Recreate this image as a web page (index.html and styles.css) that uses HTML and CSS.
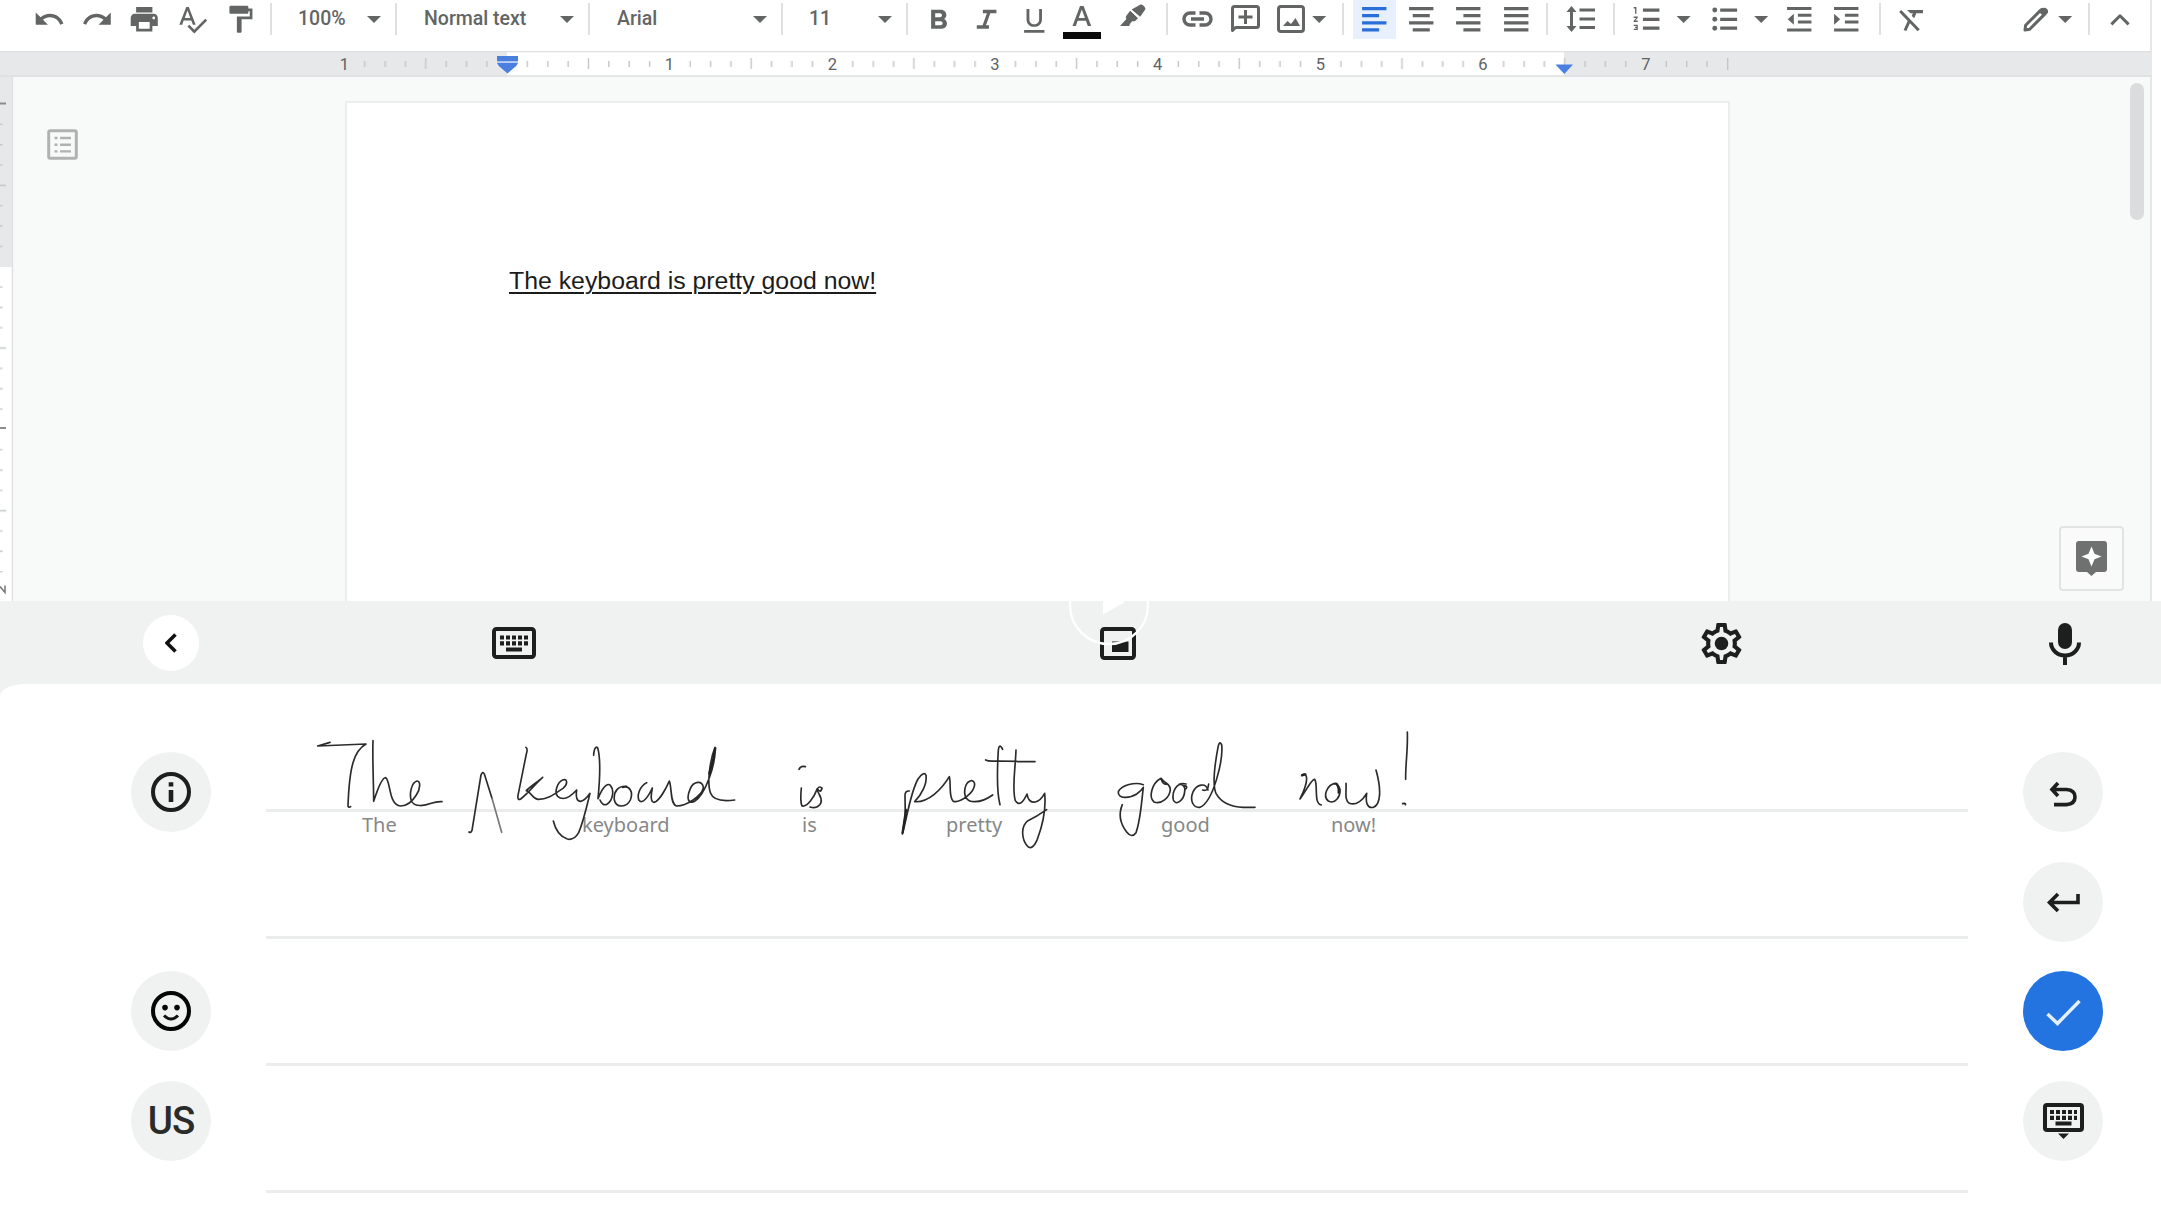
FILE: index.html
```html
<!DOCTYPE html>
<html lang="en">
<head>
<meta charset="utf-8">
<title>Document with handwriting keyboard</title>
<link rel="stylesheet" href="styles.css">
</head>
<body>
<main class="screen">
  <section class="docs">
    <header class="toolbar">
      <div class="group g-history">
        <span class="tool"><svg class="ic" viewBox="0 0 24 24"><path d="M12.5 8c-2.65 0-5.05.99-6.9 2.6L2 7v9h9l-3.62-3.62c1.39-1.16 3.16-1.88 5.12-1.88 3.54 0 6.55 2.31 7.6 5.5l2.37-.78C21.08 11.03 17.15 8 12.5 8z"/></svg></span>
        <span class="tool"><svg class="ic" viewBox="0 0 24 24"><path d="M18.4 10.6C16.55 8.99 14.15 8 11.5 8c-4.65 0-8.58 3.03-9.96 7.22L3.9 16c1.05-3.19 4.05-5.5 7.6-5.5 1.95 0 3.73.72 5.12 1.88L13 16h9V7l-3.6 3.6z"/></svg></span>
        <span class="tool"><svg class="ic" viewBox="0 0 24 24"><path d="M19 8H5c-1.660 0-3 1.340-3 3v6h4v4h12v-4h4v-6c0-1.660-1.340-3-3-3zm-3 11H8v-5h8v5zm3-7c-.550 0-1-.450-1-1s.450-1 1-1 1 .450 1 1-.450 1-1 1zm-1-9H6v4h12V3z"/></svg></span>
        <span class="tool"><svg class="ic" viewBox="0 0 24 24"><path d="M12.450 16h2.090L9.430 3H7.570L2.460 16h2.090l1.120-3h5.640l1.140 3zm-6.020-5L8.500 5.480 10.570 11H6.430zm15.160.590l-8.090 8.090L9.830 16l-1.410 1.410 5.090 5.090L23 13l-1.410-1.410z"/></svg></span>
        <span class="tool"><svg class="ic" viewBox="0 0 24 24"><path d="M18 4V3c0-.550-.450-1-1-1H5c-.550 0-1 .450-1 1v4c0 .550.450 1 1 1h12c.550 0 1-.450 1-1V6h1v4H9.500v11c0 .550.450 1 1 1h1.500c.550 0 1-.450 1-1v-9h8V4h-3z"/></svg></span>
      </div>
      <div class="group g-zoom"><span>100%</span><i class="caret"></i></div>
      <div class="group g-style"><span>Normal text</span><i class="caret"></i></div>
      <div class="group g-font"><span>Arial</span><i class="caret"></i></div>
      <div class="group g-size"><span>11</span><i class="caret"></i></div>
      <div class="group g-format">
        <span class="tool"><svg class="ic" viewBox="0 0 24 24"><path d="M15.600 11.800c.970-.670 1.650-1.770 1.650-2.800 0-2.260-1.750-4-4-4H6v14h8c2.090 0 3.700-1.700 3.700-3.790 0-1.520-.860-2.820-2.100-3.410zM9 7.500h3.500c.830 0 1.500.670 1.500 1.500s-.670 1.500-1.500 1.500H9v-3zm4 9H9v-3h4c.830 0 1.500.670 1.500 1.500s-.670 1.500-1.500 1.500z"/></svg></span>
        <span class="tool"><svg class="ic" viewBox="0 0 24 24"><path d="M9.500 5v2.500h3L9.300 16.500H5V19h9v-2.500h-2.200L15 7.500h4.500V5z"/></svg></span>
        <span class="tool"><svg class="ic" viewBox="0 0 24 24"><path d="M12 17.600c3.310 0 5.700-2.400 5.700-5.500V4.500h-2.100v7.600c0 2-1.500 3.500-3.600 3.500s-3.600-1.500-3.600-3.500V4.500H6.300v7.600c0 3.100 2.390 5.500 5.700 5.500zM4.500 20v2h15v-2z"/></svg></span>
        <span class="tool"><svg class="ic-color" viewBox="0 0 38 36"><path d="M17 2h3.600l7.600 20h-3.400l-1.900-5.200h-8.200L12.800 22H9.500zm-1.300 12h6.200L18.800 5.400z"/><path class="ink" d="M0 28h38v7H0z"/></svg></span>
        <span class="tool marker"><svg class="ic-marker" viewBox="0 0 26 24"><path d="M18.300 1.800 20 .8q1.400-.8 2.700.3l2 1.900q1.200 1.400.4 2.800l-5 7L11.600 5.600zM10.300 6.600l7.800 7.400-2.600 2.700q-1.500 1-2.800.2L10.500 19l-1.400 3H0l6.400-7.100q-1.300-1.400-.2-2.800z"/><path class="cut" d="m10 6 9 8.500"/></svg></span>
      </div>
      <div class="group g-insert">
        <span class="tool"><svg class="ic-link" viewBox="0 0 31 16"><path class="line" d="M13.500 2H8a6 6 0 0 0 0 12h5.500M17.500 2H23a6 6 0 0 1 0 12h-5.500M9 8h13"/></svg></span>
        <span class="tool"><svg class="ic-comment" viewBox="0 0 29 28"><path class="line" d="M1.500 25.500v-22q0-2 2-2h22q2 0 2 2v17q0 2-2 2h-21zM14.500 5v14M7.500 12h14"/></svg></span>
        <span class="tool image"><svg class="ic-image" viewBox="0 0 28 28"><rect class="line" x="1.500" y="1.500" width="25" height="25" rx="2.500"/><path d="m6 21 4.500-5 3.500 3 4.500-6 4.500 8z"/></svg></span>
        <i class="caret"></i>
      </div>
      <div class="group g-align">
        <span class="tool active"><svg class="ic" viewBox="0 0 24 24"><path d="M3 3h18v2.400H3zM3 8.200h12.600v2.400H3zM3 13.400h18v2.400H3zM3 18.600h12.600V21H3z"/></svg></span>
        <span class="tool"><svg class="ic" viewBox="0 0 24 24"><path d="M3 3h18v2.400H3zM5.700 8.200h12.600v2.400H5.700zM3 13.400h18v2.400H3zM5.700 18.600h12.600V21H5.700z"/></svg></span>
        <span class="tool"><svg class="ic" viewBox="0 0 24 24"><path d="M3 3h18v2.400H3zM8.400 8.200H21v2.400H8.400zM3 13.400h18v2.400H3zM8.400 18.600H21V21H8.400z"/></svg></span>
        <span class="tool"><svg class="ic" viewBox="0 0 24 24"><path d="M3 3h18v2.400H3zM3 8.200h18v2.400H3zM3 13.400h18v2.400H3zM3 18.600h18V21H3z"/></svg></span>
      </div>
      <div class="group g-spacing">
        <span class="tool"><svg class="ic-spacing" viewBox="0 0 29 26"><path d="M13.500 2.500H29v3H13.500zM13.500 11.500H29v3H13.500zM13.500 20H29v3H13.500zM4 5h3v16H4z"/><path d="M5.500 0 10.500 6H.5zM5.500 26l5-6H.5z"/></svg></span>
      </div>
      <div class="group g-lists">
        <span class="tool"><svg class="ic" viewBox="0 0 24 24"><path d="M8.800 4H21v2.400H8.800zM8.800 10.800H21v2.400H8.800zM8.800 17.400H21v2.400H8.800z"/><path d="M2 17h2v.5H3v1h1v.5H2v1h3v-4H2v1zm1-9h1V3H2v1h1v4zm-1 3h1.800L2 13.100v.9h3v-1H3.200L5 10.900V10H2v1z"/></svg></span>
        <i class="caret"></i>
        <span class="tool"><svg class="ic" viewBox="0 0 24 24"><path d="M9 4h12.500v2.400H9zM9 10.800h12.500v2.400H9zM9 17.400h12.500v2.400H9z"/><circle cx="5" cy="5.200" r="1.800"/><circle cx="5" cy="12" r="1.800"/><circle cx="5" cy="18.600" r="1.800"/></svg></span>
        <i class="caret"></i>
        <span class="tool"><svg class="ic" viewBox="0 0 24 24"><path d="M3 3h18v2.200H3zM11 8h10v2.200H11zM11 13h10v2.200H11zM3 18.800h18V21H3zM8 8v8l-4.500-4z"/></svg></span>
        <span class="tool"><svg class="ic" viewBox="0 0 24 24"><path d="M3 3h18v2.200H3zM11 8h10v2.200H11zM11 13h10v2.200H11zM3 18.800h18V21H3zM3 8v8l4.500-4z"/></svg></span>
      </div>
      <div class="group g-mode">
        <span class="tool"><svg class="ic-clear" viewBox="0 0 24 23"><path d="M8 1h16v3.300h-6.700l-2.100 5-2.400-2.400 1-2.600h-2.400z"/><path class="line" d="m1.200 2 18.500 19.300M10.500 11.500 6 21.500"/></svg></span>
        <span class="tool pencil"><svg class="ic-pencil" viewBox="0 0 25 25"><path class="line" d="M2 23l.6-4.700L17.500 3.400q2-2 4 0t0 4L6.700 22.300z"/><path d="m16 5 4-4q2.200-.8 4 1t.8 4l-4 3.600z"/></svg></span>
        <i class="caret"></i>
      </div>
      <div class="group g-collapse"><svg class="ic-chevron" viewBox="0 0 20 13"><path class="line" d="m1.400 11.400 8.600-8.600 8.600 8.600"/></svg></div>
    </header>

    <svg class="ruler" viewBox="0 0 2151 26">
      <defs>
        <pattern id="inch" x="344.500" y="0" width="162.700" height="26" patternUnits="userSpaceOnUse">
          <path class="tick" d="M20.300 10v6M40.700 10v6M61 10v6M81.300 7v11M101.700 10v6M122 10v6M142.400 10v6"/>
        </pattern>
      </defs>
      <path class="margin" d="M0 0h507v26H0zM1564 0h587v26h-587z"/>
      <path class="edge" d="M0 .5h2151M0 25h2151"/>
      <path fill="url(#inch)" d="M346 0h1300v26H346z"/>
      <path fill="url(#inch)" d="M1646 0h70v26h-70z"/>
      <path class="tick" d="M1727.700 7v12"/>
      <g class="nums"><text x="344.500" y="18.500">1</text><text x="669.500" y="18.500">1</text><text x="832.300" y="18.500">2</text><text x="995" y="18.500">3</text><text x="1157.700" y="18.500">4</text><text x="1320.400" y="18.500">5</text><text x="1483" y="18.500">6</text><text x="1646" y="18.500">7</text></g>
      <path class="stop" d="M497 5h21v5.500h-21zM497 12h21q-1.500 3-3 4l-7.500 6.500-7.500-6.500q-1.500-1-3-4zM1555.500 13.500h17.500l-8.700 9.500z"/>
      <path class="stop-gap" d="M497 10.500h21V12h-21z"/>
    </svg>

    <div class="canvas">
      <svg class="vruler" viewBox="0 0 14 524">
        <defs>
          <pattern id="vinch" x="0" y="27" width="14" height="162.700" patternUnits="userSpaceOnUse">
            <path class="tick" d="M0 20.300h2.500M0 40.700h2.500M0 61h2.500M0 81.300h6M0 101.700h2.500M0 122h2.500M0 142.400h2.500"/>
          </pattern>
        </defs>
        <path class="margin" d="M0 0h12v190H0z"/>
        <path fill="url(#vinch)" d="M0 27.500h12v486H0z"/>
        <path class="mark" d="M0 26.500h6M0 351h6"/>
        <path class="two" d="M0 509.500l5 6v-7"/>
        <path class="edge" d="M12.500 0v524"/>
      </svg>
      <aside class="outline">
        <svg class="ic-outline" viewBox="0 0 31 31"><rect x="1.700" y="1.700" width="27.600" height="27.600" rx="1.500"/><path d="M7.500 9h3M13 9h11M7.500 15.700h3M13 15.700h11M7.500 22.400h3M13 22.400h11"/></svg>
      </aside>
      <article class="page"><p class="typed">The keyboard is pretty good now!</p></article>
      <aside class="rail">
        <div class="scrollbar"></div>
        <button class="explore" aria-label="Explore"><svg class="ic-explore" viewBox="0 0 31 35"><path d="M3 0h25q3 0 3 3v25q0 3-3 3h-8l-4.500 4-4.500-4H3q-3 0-3-3V3q0-3 3-3z"/><path class="star" d="m15.500 5.500 3 7.200 7 2.800-7 2.800-3 7.200-3-7.200-7-2.800 7-2.800z"/></svg></button>
      </aside>
    </div>
  </section>

  <section class="keyboard">
    <nav class="kbar">
      <button class="back" aria-label="Back"><svg class="ic-back" viewBox="0 0 12 20"><path d="M10.500 1.500 2 10l8.500 8.500"/></svg></button>
      <svg class="ic-kb" viewBox="0 0 44 32"><rect class="o" x="2" y="2" width="40" height="28" rx="2.500"/><path class="keys" d="M8 10.500h28M8 16.300h28"/><path class="space" d="M14 22.500h16"/></svg>
      <svg class="ic-pip" viewBox="0 0 36 33"><rect class="o" x="2" y="2" width="32" height="29" rx="2.500"/><path d="M12 14.500h16.500V25H12z"/></svg>
      <svg class="ic-gear" viewBox="2 2 20 20"><path d="M19.430 12.980c.040-.320.070-.640.070-.980 0-.340-.030-.660-.070-.980l2.110-1.650c.190-.150.240-.420.120-.640l-2-3.460c-.090-.160-.260-.250-.440-.250-.060 0-.120.010-.170.030l-2.490 1c-.520-.400-1.080-.730-1.690-.980l-.380-2.650C14.460 2.180 14.250 2 14 2h-4c-.250 0-.460.180-.490.420l-.380 2.650c-.610.250-1.170.590-1.690.980l-2.490-1c-.060-.020-.120-.030-.180-.030-.170 0-.340.090-.430.250l-2 3.460c-.130.220-.070.490.120.640l2.110 1.650c-.040.320-.070.650-.070.980 0 .330.030.660.070.980l-2.110 1.650c-.190.150-.240.420-.120.640l2 3.460c.090.160.260.250.440.250.060 0 .120-.010.170-.030l2.490-1c.520.400 1.080.730 1.690.980l.380 2.650c.030.240.240.420.490.420h4c.250 0 .460-.180.490-.420l.380-2.650c.610-.250 1.170-.590 1.690-.980l2.490 1c.060.020.120.030.180.030.170 0 .340-.090.430-.250l2-3.460c.120-.220.070-.490-.120-.640l-2.110-1.650zm-1.980-1.710c.040.310.050.520.050.730 0 .210-.020.430-.050.730l-.140 1.130.89.700 1.080.840-.7 1.210-1.270-.51-1.040-.42-.9.680c-.430.320-.840.560-1.250.730l-1.060.43-.16 1.130-.2 1.350h-1.400l-.19-1.350-.16-1.130-1.060-.43c-.430-.180-.830-.410-1.230-.71l-.91-.7-1.060.43-1.270.51-.7-1.210 1.080-.84.890-.7-.14-1.130c-.030-.310-.050-.540-.050-.740s.020-.430.050-.730l.14-1.130-.89-.7-1.080-.84.7-1.210 1.270.51 1.040.42.900-.68c.430-.320.840-.560 1.250-.73l1.060-.43.160-1.130.2-1.350h1.390l.19 1.350.16 1.130 1.060.43c.430.180.830.410 1.230.71l.91.700 1.060-.43 1.270-.51.700 1.210-1.070.85-.89.700.14 1.130z"/><circle cx="12" cy="12" r="3.300"/></svg>
      <svg class="ic-mic" viewBox="0 0 32 42"><rect x="9" y="0" width="14" height="26" rx="7"/><path class="o" d="M2 19.500a14 13 0 0 0 28 0M16 32v10"/></svg>
      <svg class="play" viewBox="0 0 82 82"><circle cx="41" cy="41" r="39"/><path d="M35 22v28.500L57 38z"/></svg>
    </nav>

    <div class="pad">
      <div class="side">
        <button class="round info" aria-label="Info"><svg class="ic-face" viewBox="0 0 40 40"><circle class="o" cx="20" cy="20" r="18"/><path d="M17.700 10.200h4.600v4.200h-4.600zM17.700 18h4.600v12h-4.600z"/></svg></button>
        <button class="round" aria-label="Emoji"><svg class="ic-face dark" viewBox="0 0 40 40"><circle class="o" cx="20" cy="20" r="18"/><circle cx="14" cy="16.600" r="2.800"/><circle cx="26" cy="16.600" r="2.800"/><path class="smile" d="M13 24.500q7 7 14 0"/></svg></button>
        <button class="round lang">US</button>
      </div>

      <div class="sheet">
        <div class="line"></div><div class="line"></div><div class="line"></div><div class="line"></div>
        <span class="word w-the">The</span><span class="word w-keyboard">keyboard</span><span class="word w-is">is</span><span class="word w-pretty">pretty</span><span class="word w-good">good</span><span class="word w-now">now!</span>
        <svg class="ink-layer" viewBox="266 684 1702 200">
          <g transform="translate(290 710) scale(.33333)">
            <path d="M120 97 83 108 228 102C192 122 178 170 174 288Q176 294 182 290"/>
            <path d="M249 92C247 150 251 220 251 274C262 240 276 202 287 203C302 210 295 286 332 288C350 288 366 276 379 255C392 236 392 212 381 213C365 217 357 250 364 273C374 293 405 287 424 280Q440 274 456 275"/>
            <path d="M537 366Q543 370 546 361L573 195Q578 182 583 192L606 265"/><path class="faint" d="m606 265 29 102"/>
            <path d="M708 112Q714 116 709 132L684 256Q682 272 692 267C715 250 735 222 758 202C742 216 718 232 709 242C724 246 726 266 744 268C775 269 795 250 819 235C835 222 832 204 818 210C802 217 792 246 803 259C820 274 840 262 860 240C857 260 860 274 872 274Q885 272 900 250C890 290 880 335 866 368Q852 392 832 387C810 380 796 358 790 333"/>
            <path d="M911 136C912 112 921 105 924 117C932 150 929 215 924 266C935 238 950 216 961 226C974 240 968 272 952 282Q938 290 930 270"/>
            <path d="M1010 229C985 226 970 245 973 270C979 296 1010 292 1021 270C1031 245 1018 226 998 232M1070 218C1050 228 1040 255 1047 271C1057 284 1074 262 1087 234C1082 258 1082 276 1092 277C1106 274 1126 240 1138 213C1146 232 1140 284 1160 288C1190 288 1235 258 1240 234C1240 210 1210 212 1200 238C1188 266 1196 284 1214 274C1245 255 1278 165 1275 112C1260 150 1250 220 1262 250Q1272 278 1334 270"/>
            <path class="heavy" d="M1276 115Q1268 160 1258 190"/>
          </g>
          <g transform="translate(740 710) scale(.33333)">
            <path d="M177 178Q182 166 196 170M184 234Q180 275 186 288C202 292 222 262 232 236Q240 226 246 236M232 236C230 252 248 256 243 278Q234 298 210 291M232 236Q242 252 246 234"/>
            <path d="M508 243Q494 242 495 258L496 318 487 372C500 330 510 250 534 207Q552 182 558 196C562 220 545 254 524 275C565 278 605 238 628 200C634 225 625 260 640 274C660 280 704 248 704 222C702 205 680 210 675 235C670 262 683 276 705 275Q730 275 758 255"/>
            <path class="heavy" d="M498 300 488 368"/>
            <path d="M788 118Q778 98 775 120C772 170 768 240 780 284M737 150Q745 155 770 153L885 155M828 120C826 180 815 235 826 272C838 292 852 272 861 252C864 272 874 278 886 276Q902 272 914 250C918 290 910 340 892 388Q876 424 862 408C846 390 840 350 864 332Q890 320 920 299"/>
          </g>
          <g transform="translate(1080 710) scale(.33333)">
            <path d="M190 224C165 215 125 225 115 245C112 268 150 265 170 252Q184 242 190 232C185 270 182 330 168 368Q155 386 140 366C120 340 116 310 127 284"/>
            <path d="M243 205C215 220 205 262 222 276C245 284 270 262 271 238C270 220 255 222 243 205M243 205Q248 226 262 222M318 222C290 215 275 245 280 270C288 290 312 270 314 245Q318 225 298 222M310 228Q325 226 318 236"/>
            <path d="M384 240C378 218 350 220 338 248C330 270 338 294 360 292C400 275 430 150 425 104Q418 90 414 112C405 160 395 220 408 250Q430 290 490 292L525 292M368 240Q384 246 386 222"/>
            <path d="M666 195Q678 186 680 205Q680 228 660 267C680 240 695 206 704 208C715 222 700 282 724 285M768 220C740 222 728 260 745 273C765 284 782 260 780 238Q772 216 758 222M798 220C800 245 792 270 808 280C830 288 850 268 860 250C856 278 862 296 880 292C902 284 905 240 888 180M982 66C984 120 976 165 977 208M968 281Q978 278 976 284"/>
            <path class="heavy" d="M770 222Q778 232 776 248M666 196 676 193"/>
          </g>
        </svg>
      </div>

      <div class="side right">
        <button class="round" aria-label="Undo"><svg class="ic-undo" viewBox="0 0 28 26"><path class="o" d="M9 2 3 8.500 9 15M3 8.500h14.500q8.500.5 8.500 7.500t-8.500 7.600H5"/></svg></button>
        <button class="round" aria-label="Enter"><svg class="ic-enter" viewBox="0 0 35 21"><path class="o" d="M12 2 3.500 10.500 12 19M3.500 10.500H32V2"/></svg></button>
        <button class="round done" aria-label="Done"><svg class="ic-check" viewBox="0 0 35 27"><path class="o" d="M1.500 15 11.500 24.500 33.500 2"/></svg></button>
        <button class="round" aria-label="Hide keyboard"><svg class="ic-hide" viewBox="0 0 41 36"><rect class="o" x="2" y="2" width="37" height="25" rx="2"/><path class="keys" d="M7 9h27M7 14.800h27"/><path class="space" d="M12.500 20.500h16"/><path d="M15 30.500h11L20.500 36z"/></svg></button>
      </div>
    </div>
  </section>
</main>
</body>
</html>
```
FILE: styles.css
```css
* { box-sizing: border-box; }
body { margin: 0; background: #fff; font-family: Roboto, "Liberation Sans", sans-serif; }
svg { display: block; flex: none; }
button { border: 0; padding: 0; font: inherit; }
.screen { width: 2161px; height: 1223px; overflow: hidden; display: flex; flex-direction: column; }

/* document editor */
.docs { width: 2152px; height: 601px; border-right: 2px solid #e6e8e8; display: flex; flex-direction: column; flex: none; }
.toolbar { display: flex; height: 51px; flex: none; color: #636565; font-size: 19.5px; font-weight: 500; }
.toolbar svg { fill: #636565; }
.group { display: flex; align-items: center; height: 38px; flex: none; background: linear-gradient(#dfe1e1, #dfe1e1) right 3px / 2px 32px no-repeat; }
.group > span { white-space: nowrap; }
.tool { width: 47.6px; height: 38px; display: flex; align-items: center; justify-content: center; flex: none; }
.caret { width: 14px; height: 7px; margin-top: 1px; flex: none; background: #636565; clip-path: polygon(0 0, 100% 0, 50% 100%); }
.line { fill: none; }
.toolbar .line { fill: none; stroke: #636565; stroke-width: 3; stroke-linejoin: round; }
.ic { width: 32.5px; height: 32.5px; }

.g-history { width: 272px; padding-left: 25.6px; }
.g-zoom { width: 125px; }
.g-style { width: 193px; }
.g-font { width: 193px; }
.g-size { width: 125px; }
.g-zoom, .g-style, .g-font, .g-size { justify-content: space-between; padding: 0 16px 1px 27px; }
.g-zoom { padding-left: 26px; }
.g-size { padding-left: 26px; }
.g-zoom .caret, .g-style .caret, .g-font .caret, .g-size .caret { margin-top: 2px; }
.g-format { width: 260px; padding-left: 7px; }
.g-insert { width: 176px; padding-left: 6px; }
.g-align { width: 204px; padding-left: 6.5px; }
.g-align .tool { width: 47.3px; }
.g-spacing { width: 67px; justify-content: center; }
.g-spacing .tool { margin-right: 2px; }
.g-lists { width: 266px; padding-left: 8px; }
.g-lists .caret { margin-left: 6px; }
.g-lists .tool + .caret + .tool { margin-left: 10px; }
.g-lists .caret:nth-of-type(2) { margin-left: 6px; margin-right: 7px; }
.g-lists .caret:nth-of-type(2) + .tool { margin-left: 0; }
.g-mode { width: 209px; padding-left: 6px; }
.pencil { margin-left: 77px; }
.g-mode .caret { margin-left: -1px; }
.g-collapse { width: 60px; justify-content: center; background: none; }
.ic-color { width: 38px; height: 36px; margin-top: 6px; }
.toolbar .ic-color .ink { fill: #0a0a0a; }
.marker { margin-left: 4px; }
.ic-marker { width: 26px; height: 24px; margin-top: -7px; }
.cut { stroke: #fff; stroke-width: 1; }
.ic-link { width: 31px; height: 16px; }
.toolbar .ic-link .line { stroke-width: 3.4; }
.ic-comment { width: 29px; height: 28px; }
.ic-image { width: 28px; height: 28px; }
.image { width: 43px; }
.g-align .active { background: linear-gradient(#e8f0fd, #e8f0fd) center / 43px 40px no-repeat; height: 40px; }
.toolbar .active svg { fill: #2a6fd8; }
.ic-spacing { width: 29px; height: 26px; }
.ic-clear { width: 24px; height: 23px; margin-top: 3px; }
.ic-pencil { width: 25px; height: 25px; }
.ic-chevron { width: 20px; height: 13px; }

.ruler { width: 2151px; height: 26px; }
.margin { fill: #e7e8ea; }
.edge { stroke: #dddfe0; stroke-width: 1.5; }
.tick { stroke: #c3c5c7; stroke-width: 1.4; }
.nums { font-size: 16.5px; fill: #606264; text-anchor: middle; }
.stop { fill: #4a7fe0; }
.stop-gap { fill: #b9cff4; }
.canvas { flex: 1; background: #f8faf9; display: flex; min-height: 0; }
.vruler { width: 14px; height: 524px; background: #fff; }
.mark { stroke: #8a8c8d; stroke-width: 2; }
.two { stroke: #777; stroke-width: 1.5; fill: none; }
.outline { width: 331px; padding: 51.5px 0 0 32.5px; flex: none; }
.ic-outline { width: 31px; height: 31px; fill: none; stroke: #b0b2b2; stroke-width: 3; }
.ic-outline path { stroke-width: 2.4; }
.page { width: 1385px; margin-top: 24px; background: #fff; border: 2px solid #eceeee; border-bottom: 0; padding: 162px 0 0 162px; flex: none; }
.typed { margin: 0; font: 24.83px/32px "Liberation Sans", Arial, sans-serif; color: #1c1c1c; text-decoration: underline; text-decoration-thickness: 2px; text-underline-offset: 3px; white-space: nowrap; }
.rail { flex: 1; display: flex; flex-direction: column; align-items: flex-end; justify-content: space-between; padding: 6px 6px 10px 0; }
.scrollbar { width: 14px; height: 137px; border-radius: 7px; background: #dadcdd; }
.explore { width: 65px; height: 65px; margin-right: 20px; background: #fafafa; border: 2px solid #e2e4e4; border-radius: 4px; display: flex; align-items: center; justify-content: center; }
.ic-explore { width: 31px; height: 35px; fill: #6f7070; }
.ic-explore .star { fill: #fff; }

/* handwriting keyboard */
.keyboard { flex: 1; background: #f0f2f1; display: flex; flex-direction: column; }
.o { fill: none; stroke-width: 4; }
.keyboard svg { fill: #1d1f1f; stroke: none; }
.keyboard .o { fill: none; stroke: #1d1f1f; }
.kbar { height: 83px; flex: none; position: relative; overflow: hidden; display: flex; align-items: center; padding: 0 80px 0 143px; }
.back { width: 56px; height: 56px; border-radius: 50%; background: #fff; display: flex; align-items: center; justify-content: center; }
.ic-back { width: 12px; height: 20px; }
.keyboard .ic-back { fill: none; stroke: #111; stroke-width: 3.6; }
.ic-kb { width: 44px; height: 32px; margin: 1px 0 0 292.5px; }
.keys { stroke: #1d1f1f; stroke-width: 4.2; stroke-dasharray: 4 2; fill: none; }
.space { stroke: #1d1f1f; stroke-width: 4; fill: none; }
.ic-pip { width: 36px; height: 33px; margin: 2px 0 0 564px; }
.ic-gear { width: 41px; height: 41px; margin: 2px 0 0 565px; }
.ic-mic { width: 32px; height: 42px; margin: 2px 0 0 auto; }
.keyboard .play { position: absolute; left: 1068px; top: -37px; width: 82px; height: 82px; fill: #fff; }
.play circle { fill: none; stroke: #fff; stroke-width: 2.4; }
.pad { flex: 1; background: #fff; border-top-left-radius: 26px 12px; display: flex; }
.side { width: 266px; padding: 68px 0 0 131px; display: flex; flex-direction: column; flex: none; gap: 29.5px; }
.side.right { width: 193px; padding-left: 55px; }
.round { width: 80px; height: 80px; border-radius: 50%; background: #f0f2f1; display: flex; align-items: center; justify-content: center; flex: none; }
.info { margin-bottom: 109.5px; }
.ic-face { width: 40px; height: 40px; }
.keyboard .dark, .keyboard .dark .o { fill: #050505; }
.keyboard .dark .o { fill: none; stroke: #050505; }
.keyboard .smile { fill: none; stroke: #111; stroke-width: 3; }
.lang { font-size: 38.5px; font-weight: 500; color: #2a2c2c; letter-spacing: -1px; padding-bottom: 1px; }
.sheet { width: 1702px; flex: none; position: relative; padding-top: 1px; }
.sheet .line { height: 127.1px; border-bottom: 3px solid #ebecec; }
.word { position: absolute; top: 126.5px; font: 20px/28px "Noto Sans", "Open Sans", sans-serif; color: #868888; }
.w-the { left: 96px; }
.w-keyboard { left: 316px; }
.w-is { left: 536px; }
.w-pretty { left: 680px; }
.w-good { left: 895px; }
.w-now { left: 1065px; }
.keyboard .ink-layer { position: absolute; left: 0; top: 0; width: 1702px; height: 200px; fill: none; stroke: #2b2b2b; stroke-width: 5; stroke-linecap: round; stroke-linejoin: round; }
.ink-layer .faint { stroke: #777; }
.ink-layer .heavy { stroke: #222; stroke-width: 7; }
.ic-undo { width: 28px; height: 26px; margin-top: 4px; }
.ic-enter { width: 35px; height: 21px; margin-top: 2px; }
.keyboard .ic-undo .o, .keyboard .ic-enter .o { stroke-width: 3.6; }
.done { background: #2374e1; }
.ic-check { width: 35px; height: 27px; margin-top: 3px; }
.keyboard .ic-check .o { stroke: #e4efff; stroke-width: 3.4; }
.ic-hide { width: 41px; height: 36px; }
```
